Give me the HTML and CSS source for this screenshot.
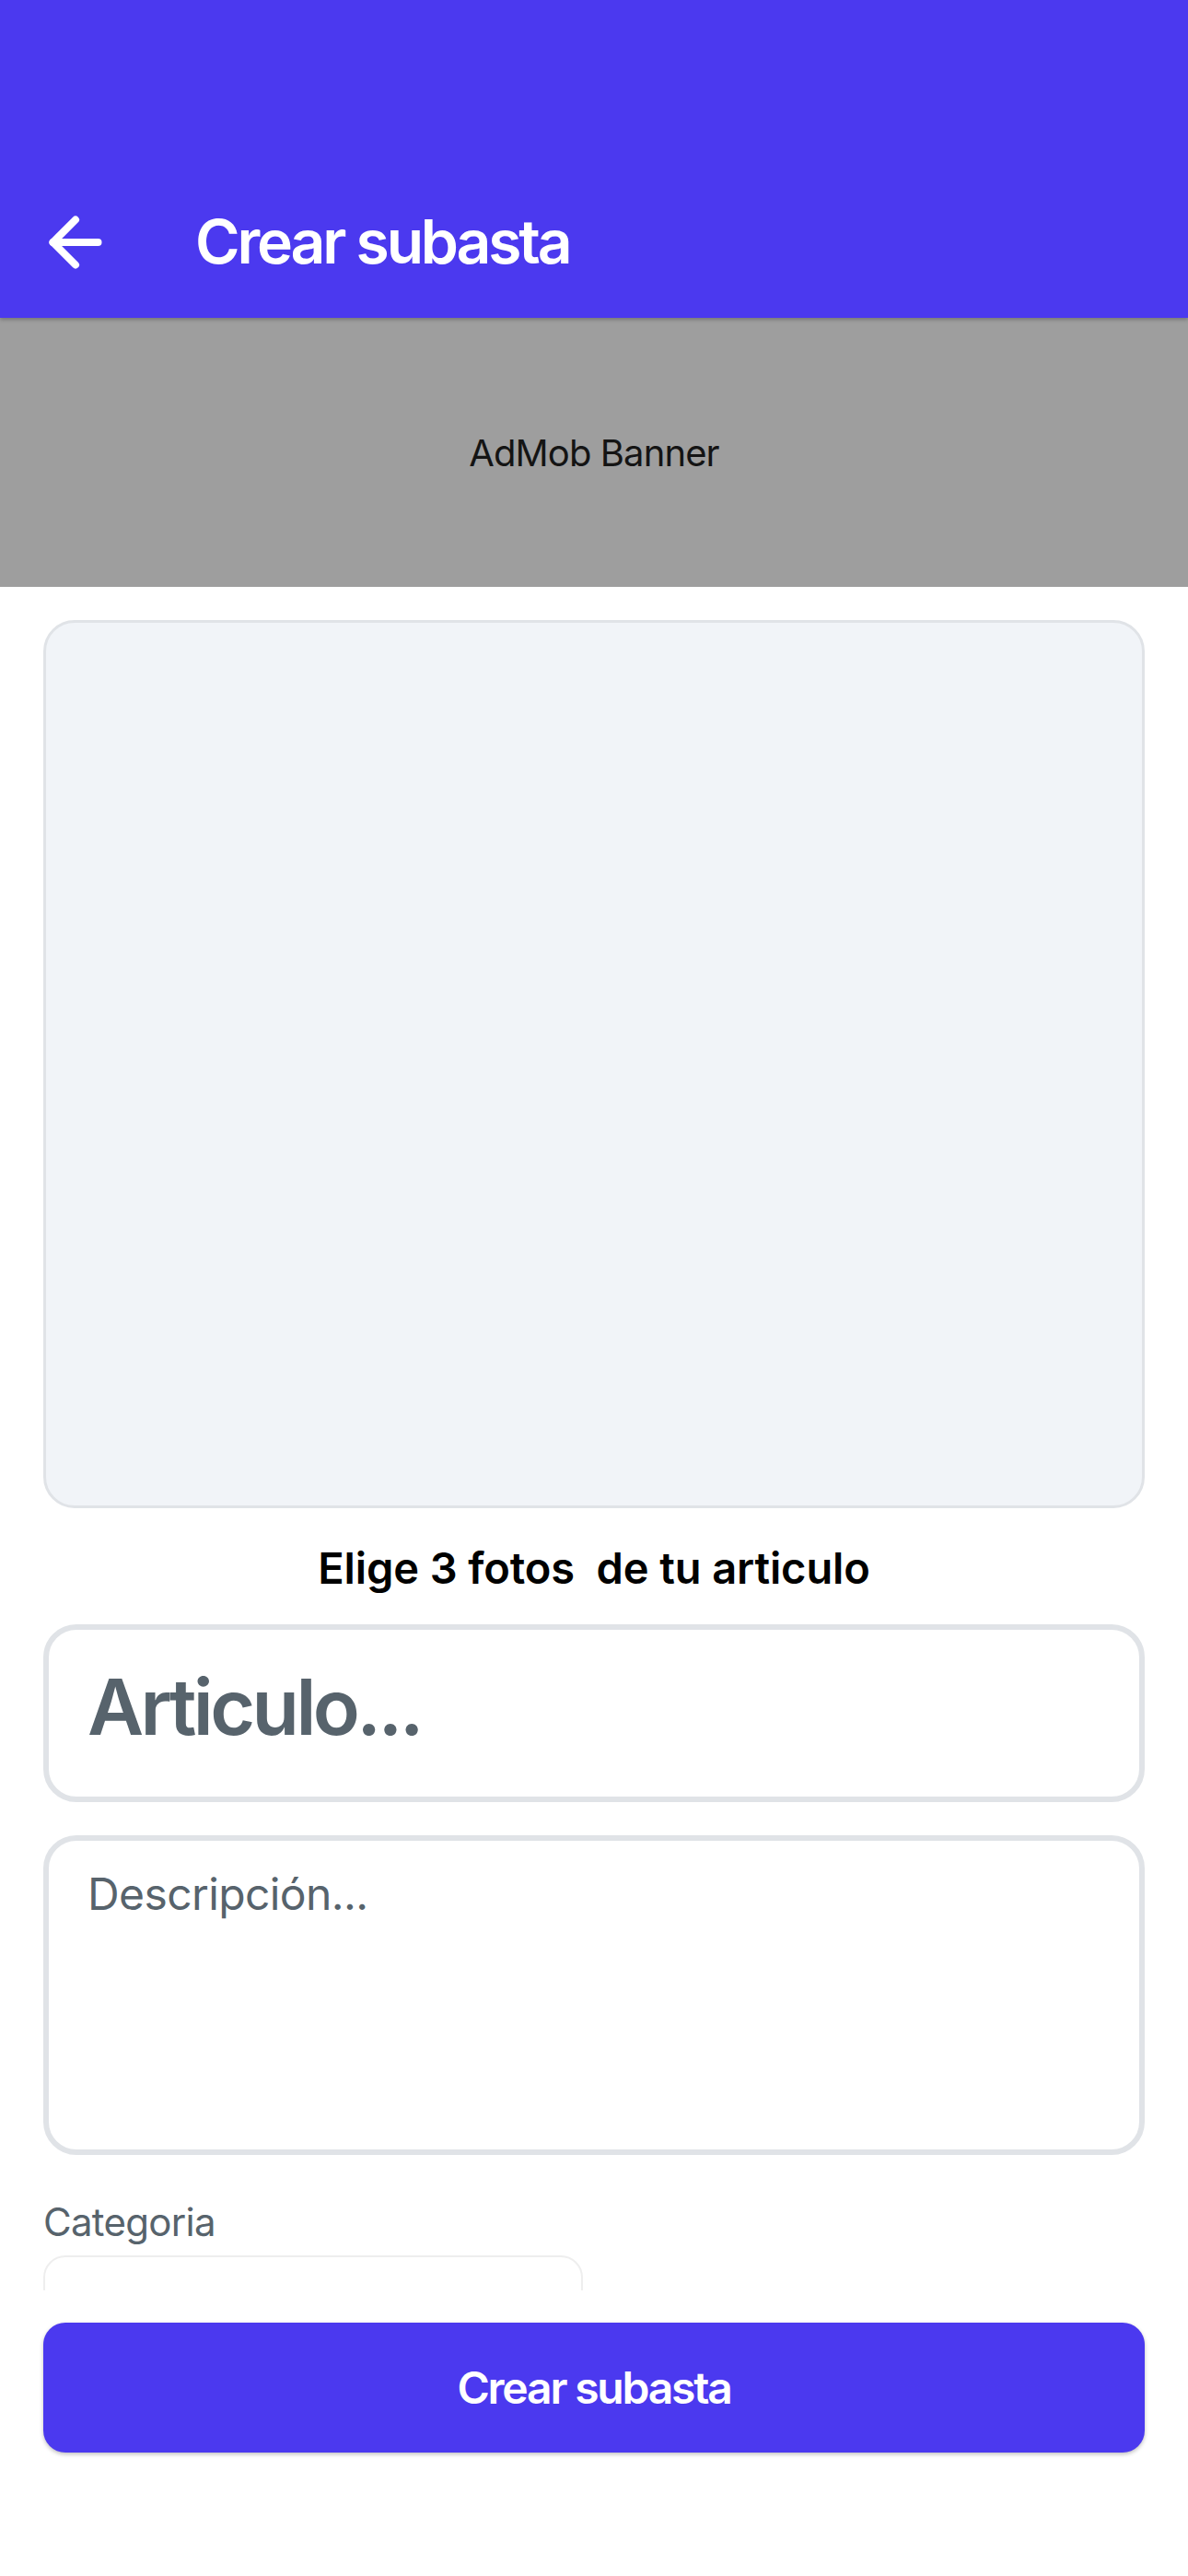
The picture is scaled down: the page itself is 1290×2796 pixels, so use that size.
FILE: index.html
```html
<!DOCTYPE html>
<html lang="es">

<head>
    <meta charset="UTF-8">
    <meta name="viewport" content="width=device-width, initial-scale=1.0">
    <title>Crear subasta</title>
    <link rel="stylesheet" href="styles.css">
</head>

<body>
    <div class="app">
        <header class="app-bar">
            <div class="app-bar-row">
                <button class="back-btn" aria-label="Volver">
                    <svg viewBox="0 0 24 24" width="84" height="84" fill="none" stroke="#ffffff"
                        stroke-width="2.3" stroke-linecap="round" stroke-linejoin="round">
                        <path d="M19 12H5" />
                        <path d="M12 19l-7-7 7-7" />
                    </svg>
                </button>
                <h1 class="app-title">Crear subasta</h1>
            </div>
        </header>

        <div class="ad-banner">AdMob Banner</div>

        <main class="form-scroll">
            <div class="photo-picker"></div>

            <p class="photo-hint">Elige 3 fotos&nbsp; de tu articulo</p>

            <div class="field field-title">
                <span class="placeholder">Articulo...</span>
            </div>

            <div class="field field-desc">
                <span class="placeholder">Descripción...</span>
            </div>

            <label class="field-label">Categoria</label>
            <div class="dropdown"></div>
        </main>

        <div class="footer">
            <button class="submit-btn">Crear subasta</button>
        </div>
    </div>
</body>

</html>
```

FILE: styles.css
```css
* {
    box-sizing: border-box;
}

body {
    margin: 0;
    background-color: #ffffff;
    font-family: Inter, "Noto Sans", sans-serif;
}

.app {
    width: 1290px;
    height: 2796px;
    display: flex;
    flex-direction: column;
    overflow: hidden;
}

/* top bar */
.app-bar {
    position: relative;
    z-index: 2;
    height: 345px;
    padding-top: 180px;
    background-color: #4B39EF;
    box-shadow: 0 2px 4px rgba(0, 0, 0, 0.25);
}

.app-bar-row {
    height: 165px;
    display: flex;
    align-items: center;
}

.back-btn {
    margin-left: 40px;
    padding: 0;
    width: 84px;
    height: 84px;
    background: none;
    border: none;
}

.back-btn svg {
    display: block;
}

.app-title {
    margin: 0 0 0 88px;
    color: #ffffff;
    font-size: 66px;
    font-weight: 600;
    letter-spacing: -3.2px;
    line-height: 1.2;
}

/* ad */
.ad-banner {
    height: 292px;
    display: flex;
    align-items: center;
    justify-content: center;
    background-color: #9E9E9E;
    color: #141414;
    font-size: 40px;
    letter-spacing: -0.9px;
}

/* form */
.form-scroll {
    height: 1849px;
    padding: 36px 47px 0;
    overflow: hidden;
}

.photo-picker {
    height: 964px;
    background-color: #F1F4F8;
    border: 3px solid #E0E3E7;
    border-radius: 34px;
}

.photo-hint {
    margin: 37px 0 0;
    text-align: center;
    color: #000000;
    font-size: 47px;
    font-weight: 600;
    letter-spacing: -0.1px;
    line-height: 1.2;
}

.field {
    border: 6px solid #E0E3E7;
    border-radius: 36px;
    background-color: #ffffff;
    padding-left: 42px;
}

.placeholder {
    color: #57636C;
    line-height: 1.2;
}

.field-title {
    margin-top: 33px;
    height: 193px;
    padding-top: 34px;
}

.field-title .placeholder {
    font-size: 84px;
    font-weight: 600;
    letter-spacing: -3.6px;
}

.field-desc {
    margin-top: 36px;
    height: 347px;
    padding-top: 29px;
}

.field-desc .placeholder {
    font-size: 48px;
    letter-spacing: -0.6px;
}

.field-label {
    display: block;
    margin-top: 48px;
    color: #57636C;
    font-size: 42px;
    letter-spacing: -0.7px;
    line-height: 1.2;
}

.dropdown {
    margin-top: 10px;
    width: 586px;
    height: 120px;
    border: 2px solid #EEEEEE;
    border-radius: 24px;
    background-color: #ffffff;
}

/* bottom button */
.footer {
    padding: 35px 47px 0;
}

.submit-btn {
    width: 100%;
    height: 141px;
    background-color: #4B39EF;
    color: #ffffff;
    border: none;
    border-radius: 24px;
    box-shadow: 0 2px 4px rgba(0, 0, 0, 0.25);
    font-family: Inter, "Noto Sans", sans-serif;
    font-size: 48px;
    font-weight: 600;
    letter-spacing: -2.2px;
}
```
